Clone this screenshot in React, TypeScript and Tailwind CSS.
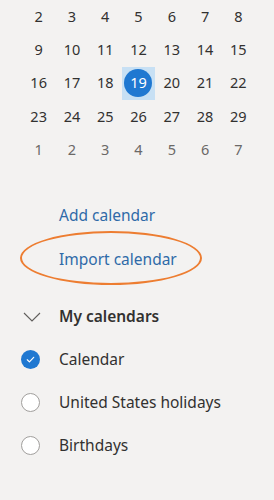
import React from "react";

const rows: number[][] = [
  [2, 3, 4, 5, 6, 7, 8],
  [9, 10, 11, 12, 13, 14, 15],
  [16, 17, 18, 19, 20, 21, 22],
  [23, 24, 25, 26, 27, 28, 29],
  [1, 2, 3, 4, 5, 6, 7],
];

const calendars = [
  { name: "Calendar", checked: true },
  { name: "United States holidays", checked: false },
  { name: "Birthdays", checked: false },
];

const Check = ({ checked }: { checked: boolean }) =>
  checked ? (
    <span className="flex items-center justify-center w-[19px] h-[19px] rounded-full bg-[#1f78d1]">
      <svg width="11" height="11" viewBox="0 0 12 12" fill="none">
        <path d="M2.5 6.3l2.3 2.3 4.7-5" stroke="white" strokeWidth="1.3" strokeLinecap="round" strokeLinejoin="round" />
      </svg>
    </span>
  ) : (
    <span className="block w-[19px] h-[19px] rounded-full bg-white border border-[#a19f9d]" />
  );

export default function App() {
  return (
    <div
      className="w-[274px] h-[500px] bg-[#f3f2f1] overflow-hidden"
      style={{ fontFamily: '"Segoe UI", "Noto Sans", sans-serif' }}
    >
      <div className="ml-[22px] w-[233px] grid grid-cols-7">
        {rows.map((row, r) =>
          row.map((d, c) => {
            const today = r === 2 && d === 19;
            return (
              <div
                key={`${r}-${c}`}
                className={`h-[33.3px] flex items-center justify-center text-[14.5px] ${
                  today ? "bg-[#c7e0f4]" : ""
                } ${r === 4 ? "text-[#6b6967]" : "text-[#323130]"}`}
              >
                {today ? (
                  <span className="w-[28px] h-[28px] rounded-full bg-[#1f78d1] text-white flex items-center justify-center">
                    {d}
                  </span>
                ) : (
                  d
                )}
              </div>
            );
          })
        )}
      </div>

      <div className="mt-[27px] relative">
        <div className="h-[44px] flex items-center pl-[59px] text-[15.5px] text-[#2f6aa8]">
          Add calendar
        </div>
        <div className="h-[44px] flex items-center pl-[59px] text-[15.5px] text-[#2f6aa8]">
          Import calendar
        </div>
        <div className="absolute left-[20px] top-[38px] w-[182px] h-[54px] rounded-[50%] border-2 border-[#ed7d31]" />
      </div>

      <div className="mt-[14px]">
        <div className="h-[43px] flex items-center">
          <svg className="ml-[23px] w-[18px] h-[10px]" viewBox="0 0 18 10" fill="none">
            <path d="M1 1l8 8 8-8" stroke="#605e5c" strokeWidth="1.1" />
          </svg>
          <span className="ml-[18px] text-[15.5px] font-semibold text-[#323130]">My calendars</span>
        </div>
        {calendars.map((cal) => (
          <div key={cal.name} className="h-[43px] flex items-center">
            <span className="ml-[21px]">
              <Check checked={cal.checked} />
            </span>
            <span className="ml-[19px] text-[15.5px] text-[#323130]">{cal.name}</span>
          </div>
        ))}
      </div>
    </div>
  );
}
